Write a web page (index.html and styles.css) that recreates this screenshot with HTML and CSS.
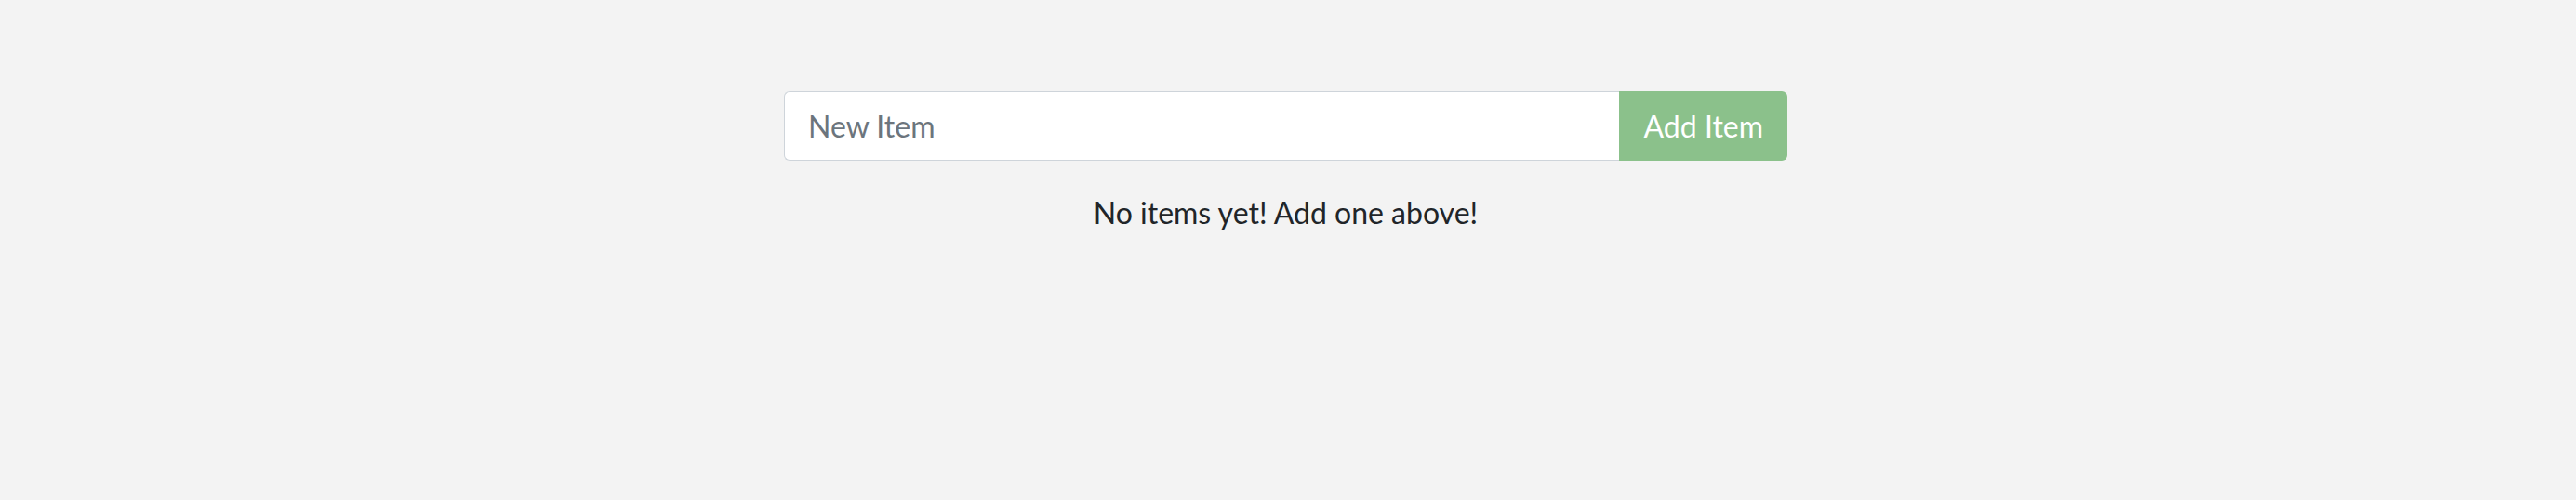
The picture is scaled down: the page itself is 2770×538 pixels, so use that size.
FILE: index.html
```html
<!DOCTYPE html>
<html>
<head>
<meta charset="utf-8">
<link rel="stylesheet" href="styles.css">
</head>
<body>
<main class="app">
  <form class="add-form">
    <input class="item-input" type="text" placeholder="New Item">
    <button class="add-btn" type="button" disabled>Add Item</button>
  </form>
  <p class="empty">No items yet! Add one above!</p>
</main>
</body>
</html>
```
FILE: styles.css
```css
html, body {
  margin: 0;
  padding: 0;
  background: #f3f3f3;
  font-family: Lato, "Noto Sans", sans-serif;
  color: #212529;
}
.app {
  display: flex;
  flex-direction: column;
  align-items: center;
  padding-top: 98px;
  padding-right: 5px;
}
.add-form {
  display: flex;
  width: 1079px;
  height: 75px;
}
.item-input {
  flex: 1;
  min-width: 0;
  box-sizing: border-box;
  height: 75px;
  border: 1px solid #ced4da;
  border-right: none;
  border-radius: 6px 0 0 6px;
  background: #fff;
  padding: 0 25px;
  font-family: inherit;
  font-size: 32px;
  color: #495057;
  outline: none;
}
.item-input::placeholder {
  color: #6c757d;
  opacity: 1;
}
.add-btn {
  box-sizing: border-box;
  height: 75px;
  border: none;
  border-radius: 0 6px 6px 0;
  background: #8bc18b;
  color: #fff;
  font-family: inherit;
  font-size: 32px;
  padding: 0 26px 0 27px;
}
.empty {
  margin: 0;
  margin-top: 37px;
  font-size: 32px;
  line-height: 1.2;
}
```
